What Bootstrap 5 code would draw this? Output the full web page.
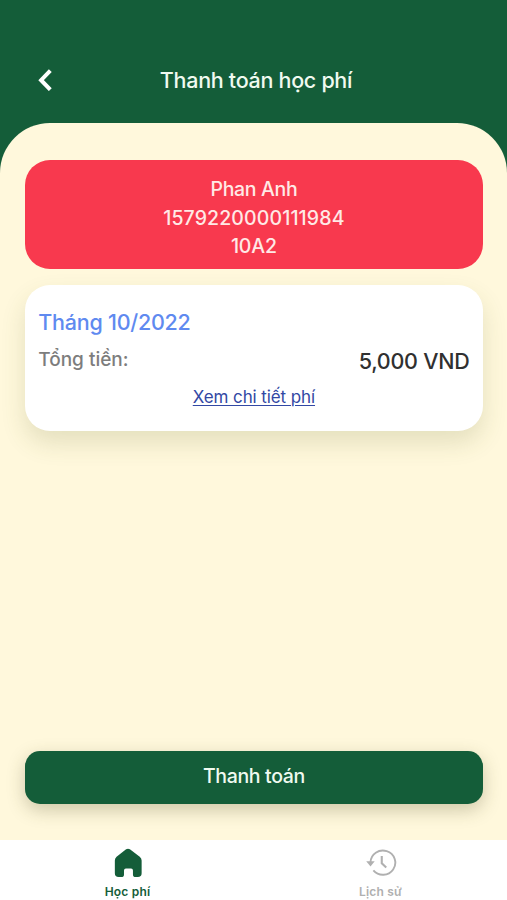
<!DOCTYPE html>
<html lang="vi">
<head>
<meta charset="utf-8">
<meta name="viewport" content="width=device-width, initial-scale=1">
<title>Thanh toán học phí</title>
<link href="https://cdn.jsdelivr.net/npm/bootstrap@5.3.0/dist/css/bootstrap.min.css" rel="stylesheet">
<style>
  body { font-family: Inter, "Liberation Sans", sans-serif; background: #145d39; font-weight: 500; }
  .screen { height: 900px; overflow: hidden; }
  .topbar { height: 123px; padding: 58px 33px 0 34px; }
  .topbar-side { width: 22px; height: 44px; }
  .topbar-title { font-size: 21.5px; line-height: 44px; font-weight: 500; color: #f0faf0; letter-spacing: -.3px; }
  .sheet { background: #fff8dc; border-radius: 50px 50px 0 0; padding: 37px 24.5px 36.4px 25.3px; }
  .student { background: #f8394e; color: #ffe9e6; border-radius: 25px; height: 109.4px; padding-top: 15px; font-size: 19.5px; line-height: 28.6px; }
  .s-name { letter-spacing: -.35px; }
  .s-code { letter-spacing: .12px; }
  .s-class { letter-spacing: -.15px; }
  .fee { border-radius: 25px; height: 146.3px; margin-top: 15.3px; padding: 22px 13px 0; box-shadow: 0 12px 24px rgba(90,100,40,.16); }
  .fee-month { font-size: 21.5px; line-height: 30px; color: #5f8af0; letter-spacing: -.25px; }
  .fee-row { height: 34px; margin-top: 7px; }
  .fee-label { font-size: 19px; line-height: 32px; color: #7d7d7d; }
  .fee-sum { font-size: 21.5px; line-height: 34px; color: #303030; letter-spacing: -.25px; }
  .fee-link { font-size: 17px; line-height: 24px; color: #3248a4; font-weight: 400; letter-spacing: -.1px; text-underline-offset: 2px; text-decoration-thickness: 1px; }
  .fee-detail { margin-top: 7px; }
  .pay { height: 53px; border-radius: 15px; background: #145d39; color: #f0faf0; font-size: 19.5px; font-weight: 500; letter-spacing: -.35px; box-shadow: 0 6px 18px rgba(70,70,30,.27); }
  .pay:hover { background: #145d39; color: #f0faf0; }
  .tabs { height: 60px; font-size: 12px; line-height: 16px; font-weight: 600; padding-left: 1px; }
  .tab-on { color: #145d39; letter-spacing: .2px; }
  .tab-off { color: #b0b0b0; letter-spacing: .2px; }
  .tab-text { margin-top: 5.5px; }
</style>
</head>
<body>
<div class="screen d-flex flex-column">
  <header class="topbar d-flex justify-content-between">
    <a href="#" class="topbar-side d-flex align-items-center" aria-label="Quay lại">
      <svg width="22" height="22" viewBox="0 0 22 22" fill="none" stroke="#fff" stroke-width="4"><path d="M16.3 1.7 7.1 11.2 16.3 20.7"/></svg>
    </a>
    <h1 class="topbar-title m-0 ps-1 text-nowrap">Thanh toán học phí</h1>
    <div class="topbar-side"></div>
  </header>
  <main class="sheet flex-grow-1 d-flex flex-column">
    <section class="student text-center">
      <div class="s-name">Phan Anh</div>
      <div class="s-code">1579220000111984</div>
      <div class="s-class">10A2</div>
    </section>
    <section class="fee bg-white">
      <div class="fee-month">Tháng 10/2022</div>
      <div class="fee-row d-flex justify-content-between">
        <span class="fee-label">Tổng tiền:</span>
        <span class="fee-sum">5,000 VND</span>
      </div>
      <div class="fee-detail text-center"><a href="#" class="fee-link">Xem chi tiết phí</a></div>
    </section>
    <button type="button" class="pay btn border-0 w-100 mt-auto">Thanh toán</button>
  </main>
  <nav class="tabs bg-white d-flex text-center">
    <div class="tab-on w-50 d-flex flex-column align-items-center">
      <svg class="mt-2" width="32" height="32" viewBox="0 0 32 32" fill="currentColor"><path d="M14 1.4Q16 0 18 1.4L28.3 9.2Q30.3 10.8 30.3 13V26.5Q30.3 30.5 26.3 30.5H24Q21.2 30.5 21.2 27.7V23.5Q21.2 21.5 19.2 21.5H13.8Q11.8 21.5 11.8 23.5V27.7Q11.8 30.5 9 30.5H6.2Q2.2 30.5 2.2 26.5V13Q2.2 10.8 4 9.2Z"/></svg>
      <span class="tab-text">Học phí</span>
    </div>
    <div class="tab-off w-50 d-flex flex-column align-items-center">
      <svg class="mt-2" width="32" height="32" viewBox="0 0 32 32" fill="none" stroke="currentColor" stroke-width="2"><path d="M5 15A13 12.7 0 1 1 8 23.5"/><path d="M16.8 8.5V16L21.5 20.5" stroke-width="2.2"/><path d="M.5 14H9.4L5 19.3Z" fill="currentColor" stroke="none"/></svg>
      <span class="tab-text">Lịch sử</span>
    </div>
  </nav>
</div>
<script src="https://cdn.jsdelivr.net/npm/bootstrap@5.3.0/dist/js/bootstrap.bundle.min.js"></script>
</body>
</html>
